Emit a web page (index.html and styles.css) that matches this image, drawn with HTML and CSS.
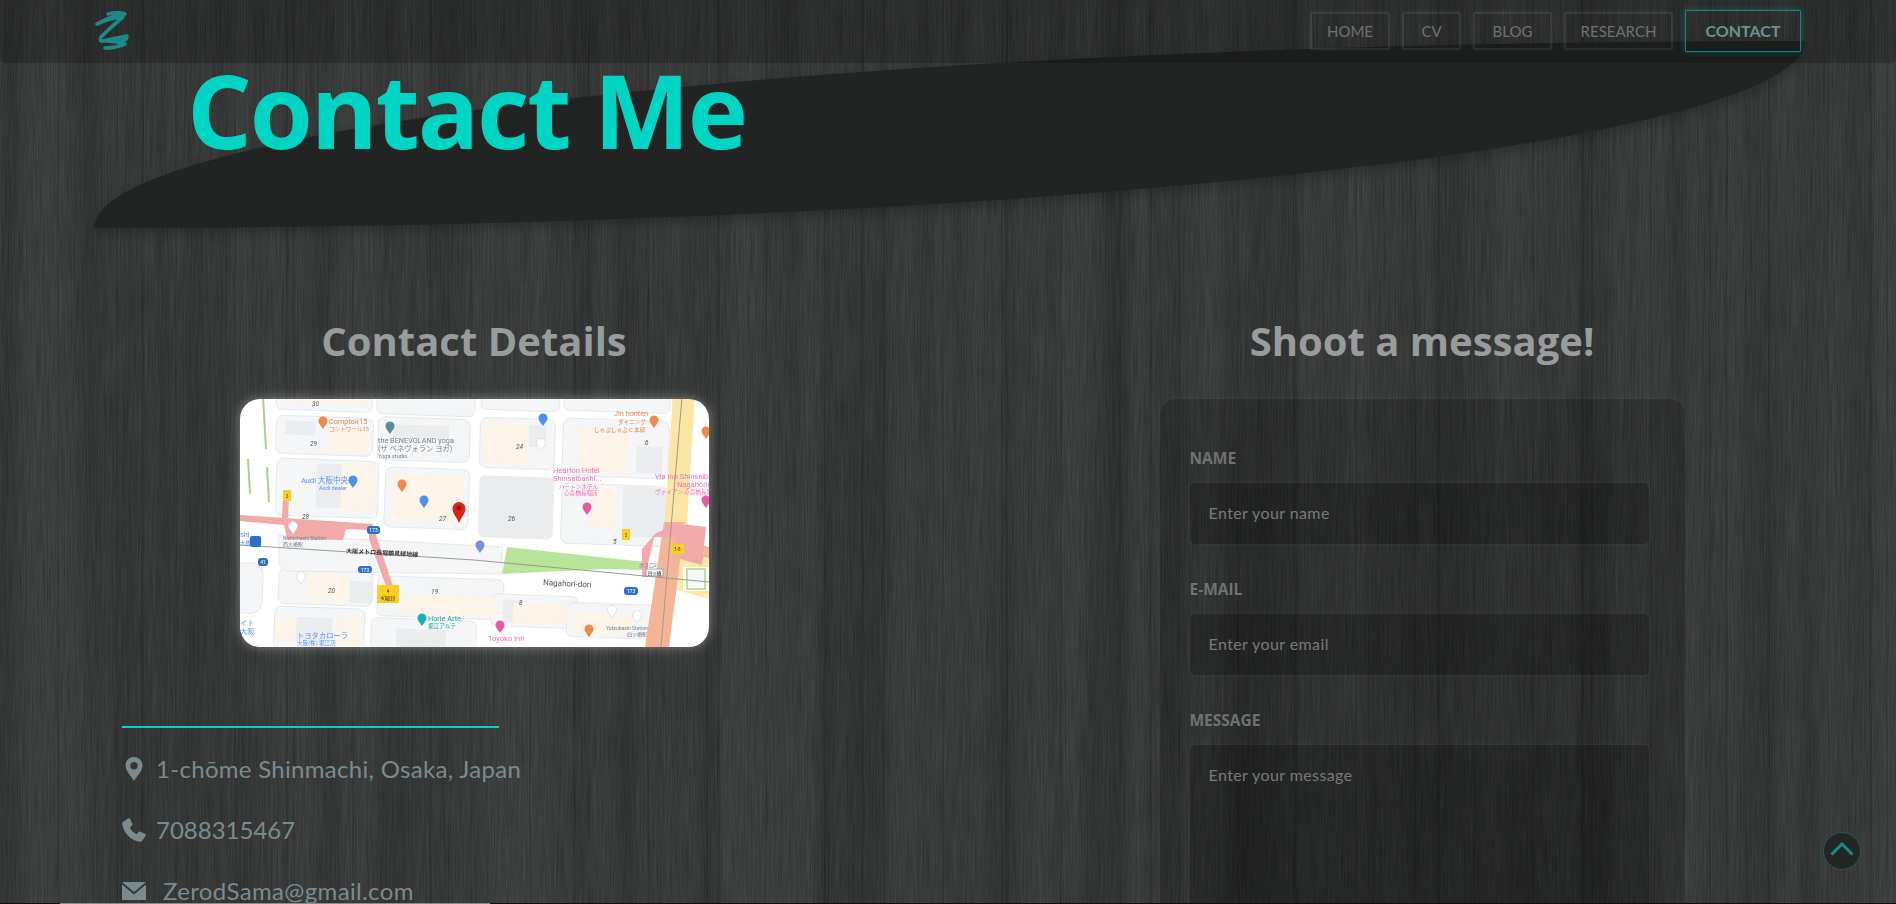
FILE: index.html
```html
<!DOCTYPE html>
<html lang="en">
<head>
<meta charset="utf-8">
<title>Contact Me</title>
<link rel="stylesheet" href="styles.css">
</head>
<body>
<svg class="wood" width="1896" height="904" aria-hidden="true">
  <defs>
    <filter id="grain" x="0" y="0" width="100%" height="100%">
      <feTurbulence type="fractalNoise" baseFrequency="0.7 0.018" numOctaves="3" seed="4"/>
      <feColorMatrix type="matrix" values="0 0 0 0 0  0 0 0 0 0  0 0 0 0 0  0.42 0 0 0 -0.12"/>
    </filter>
    <filter id="planks" x="0" y="0" width="100%" height="100%">
      <feTurbulence type="fractalNoise" baseFrequency="0.03 0.0006" numOctaves="2" seed="11"/>
      <feColorMatrix type="matrix" values="0 0 0 0 0  0 0 0 0 0  0 0 0 0 0  0.4 0 0 0 -0.13"/>
    </filter>
  </defs>
  <rect width="1896" height="904" filter="url(#planks)"/>
  <rect width="1896" height="904" filter="url(#grain)"/>
</svg>

<div class="leaf"></div>

<header class="bar">
  <a class="logo" href="#">
    <svg width="40" height="44" viewBox="0 0 40 44">
      <path class="logo-stroke" d="M16 5 Q26 2 33 5 Q20 6 5 15 Q18 9 31 8 Q20 17 9 28 Q7 33 11 32 Q24 29 35 27 Q35 31 30 32 Q22 32 14 32 Q24 32 33 35 Q24 39 13 39"/>
    </svg>
  </a>
  <nav class="nav">
    <a class="nav-item" href="#">HOME</a>
    <a class="nav-item" href="#">CV</a>
    <a class="nav-item" href="#">BLOG</a>
    <a class="nav-item" href="#">RESEARCH</a>
    <a class="nav-item active" href="#">CONTACT</a>
  </nav>
</header>

<section class="hero"><h1 class="title">Contact Me</h1></section>

<main class="columns">
  <section class="col">
    <h2 class="col-title">Contact Details</h2>
    <div class="map">
      <svg class="map-svg" width="469" height="248" viewBox="0 0 469 248">
        <defs>
          <path id="pin" d="M0 6 C-1.600 3 -4.500 1 -4.500 -2 A4.500 4.500 0 1 1 4.500 -2 C4.500 1 1.600 3 0 6 Z"/>
        </defs>
        <rect width="469" height="248" fill="#fff"/>
        <g transform="rotate(2 234 124)">
          <g class="blocks">
            <rect x="32" y="-8" width="96" height="25" rx="6"/>
            <rect x="133" y="-8" width="98" height="26" rx="6"/>
            <rect x="33" y="23" width="97" height="38" rx="7"/>
            <rect x="135" y="21" width="92" height="43" rx="7"/>
            <rect x="35" y="66" width="102" height="57" rx="7"/>
            <rect x="144" y="71" width="84" height="60" rx="7"/>
            <rect x="237" y="18" width="75" height="50" rx="7"/>
            <rect x="320" y="16" width="106" height="57" rx="7"/>
            <rect x="321" y="81" width="105" height="60" rx="7"/>
            <rect x="237" y="-8" width="78" height="18" rx="5"/>
            <rect x="320" y="-8" width="106" height="16" rx="5"/>
            <rect x="41" y="175" width="94" height="36" rx="7"/>
            <rect x="140" y="180" width="126" height="40" rx="6"/>
            <rect x="38" y="214" width="90" height="42" rx="6"/>
            <rect x="135" y="222" width="105" height="32" rx="6"/>
            <rect x="254" y="194" width="86" height="32" rx="6"/>
            <rect x="330" y="200" width="90" height="34" rx="6"/>
            <rect x="-8" y="172" width="33" height="50" rx="12"/>
          </g>
          <g class="grey-blocks">
            <rect x="238" y="76" width="75" height="62" rx="6"/>
            <rect x="382" y="82" width="44" height="50"/>
            <rect x="42" y="28" width="30" height="14"/>
            <rect x="75" y="70" width="26" height="44"/>
            <rect x="112" y="186" width="22" height="22"/>
            <rect x="266" y="200" width="22" height="22"/>
            <rect x="281" y="24" width="22" height="22"/>
            <rect x="352" y="40" width="18" height="26"/>
            <rect x="394" y="42" width="26" height="26"/>
            <rect x="150" y="28" width="56" height="14"/>
            <rect x="60" y="224" width="36" height="24"/>
            <rect x="160" y="232" width="50" height="20"/>
          </g>
          <g class="tan-blocks">
            <rect x="42" y="-4" width="80" height="14"/>
            <rect x="84" y="34" width="44" height="24"/>
            <rect x="100" y="70" width="34" height="46"/>
            <rect x="150" y="78" width="72" height="46"/>
            <rect x="240" y="22" width="46" height="42"/>
            <rect x="346" y="84" width="30" height="40"/>
            <rect x="336" y="26" width="50" height="44"/>
            <rect x="70" y="180" width="40" height="28"/>
            <rect x="165" y="198" width="96" height="20"/>
            <rect x="276" y="202" width="55" height="20"/>
            <rect x="335" y="210" width="60" height="20"/>
            <rect x="40" y="226" width="20" height="24"/>
            <rect x="100" y="222" width="24" height="30"/>
          </g>
        </g>
        <polygon class="lane" points="39,136 262,148 262,175 45,172 39,165"/>
        <polygon points="267,148 406,163 404,171 364,170 262,175" fill="#b9e59a"/>
        <polygon points="452,148 469,150 469,200 434,190 438,160" fill="#fde9a8"/>
        <rect x="443" y="168" width="26" height="24" fill="#fff"/>
        <rect x="447" y="170" width="18" height="20" fill="#f5f6f6" stroke="#b9e59a" stroke-width="2"/>
        <polygon points="433,-8 455,-8 447,125 425,125" fill="#fde293" opacity=".85"/>
        <polygon points="424,123 445,123 429,248 405,248" fill="#f4b498"/>
        <polygon points="440,140 469,148 469,159 438,152" fill="#f4b498"/>
        <g class="pink">
          <polygon points="0,116 133,125 131,131 106,130 103,141 47,140 44,126 0,122"/>
          <polygon points="43,98 49,98 48,119 42,119"/>
          <polygon points="129,130 134,130 153,187 146,187 129,140"/>
          <polygon points="426,123 466,128 462,166 440,160 436,138 414,138 408,165 408,178 402,178 402,150 416,134 426,130"/>
        </g>
        <path d="M0 146 L234 161 L469 183" class="rail"/>
        <path d="M442 -2 L421 248" class="rail"/>
        <g stroke="#a6d28b" stroke-width="2" fill="none">
          <path d="M23 -2 L26 50"/>
          <path d="M8 60 L10 95"/>
          <path d="M27 68 L29 103"/>
        </g>
        <text x="72" y="7" class="num">30</text>
        <text x="70" y="47" class="num">29</text>
        <text x="62" y="120" class="num">28</text>
        <text x="199" y="122" class="num">27</text>
        <text x="88" y="194" class="num">20</text>
        <text x="191" y="195" class="num">19</text>
        <text x="276" y="50" class="num">24</text>
        <text x="268" y="122" class="num">26</text>
        <text x="373" y="145" class="num">5</text>
        <text x="405" y="46" class="num">6</text>
        <text x="279" y="206" class="num">8</text>
        <text x="89" y="25" class="orange">Comptoir15</text>
        <text x="89" y="32" class="orange small">コントワール15</text>
        <text x="138" y="44" class="grey">the BENEVOLAND yoga</text>
        <text x="138" y="52" class="grey">(ザ ベネヴォラン ヨガ)</text>
        <text x="138" y="59" class="grey small">Yoga studio</text>
        <text x="61" y="84" class="blue big">Audi 大阪中央</text>
        <text x="79" y="91" class="blue small">Audi dealer</text>
        <text x="43" y="141" class="grey tiny">Nishichashi Station</text>
        <text x="43" y="147" class="grey tiny">西大橋駅</text>
        <text x="106" y="154" class="line-name" transform="rotate(3 106 154)">大阪メトロ長堀鶴見緑地線</text>
        <text x="188" y="222" class="teal">Horie Arte</text>
        <text x="188" y="229" class="teal small">堀江アルテ</text>
        <text x="57" y="239" class="blue">トヨタカローラ</text>
        <text x="57" y="246" class="blue small">大阪(株) 堀江店</text>
        <text x="0" y="138" class="blue">shi</text>
        <text x="0" y="146" class="blue small">大橋</text>
        <text x="0" y="226" class="blue">イト</text>
        <text x="0" y="235" class="blue">大阪</text>
        <text x="374" y="17" class="orange">Jin honten</text>
        <text x="378" y="25" class="orange small">ダイニング</text>
        <text x="354" y="33" class="orange small">しゃぶしゃぶ C 本邸</text>
        <text x="313" y="74" class="pinktext big">Hearton Hotel</text>
        <text x="313" y="82" class="pinktext big">Shinsaibashi...</text>
        <text x="319" y="90" class="pinktext small">ハートンホテル</text>
        <text x="324" y="96" class="pinktext small">心斎橋長堀店</text>
        <text x="415" y="80" class="pinktext big">Via Inn Shinsaiba</text>
        <text x="437" y="88" class="pinktext big">Nagahorid</text>
        <text x="415" y="95" class="pinktext small">ヴァイアン 心斎橋長堀</text>
        <text x="303" y="186" class="road" transform="rotate(3 303 186)">Nagahori-dori</text>
        <text x="366" y="231" class="grey tiny">Yotsubashi Station</text>
        <text x="387" y="237" class="grey tiny">四ツ橋駅</text>
        <text x="248" y="242" class="pinktext big">Toyoko Inn</text>
        <text x="399" y="168" class="grey tiny">ボスロ2</text>
        <g class="shield">
          <rect x="127" y="127" width="13" height="8" rx="3"/>
          <rect x="118" y="167" width="14" height="7" rx="3"/>
          <rect x="18" y="159" width="10" height="8" rx="3"/>
          <rect x="384" y="188" width="14" height="8" rx="3"/>
          <rect x="10" y="137" width="11" height="11" rx="2" fill="#1a8fd1"/>
        </g>
        <text x="133.500" y="133" class="shield-text">173</text>
        <text x="125" y="172.500" class="shield-text">173</text>
        <text x="23" y="165" class="shield-text">41</text>
        <text x="391" y="194" class="shield-text">173</text>
        <g class="tag">
          <rect x="43" y="91" width="8" height="11"/>
          <rect x="137" y="186" width="22" height="18"/>
          <rect x="382" y="130" width="8" height="11"/>
          <rect x="431" y="145" width="13" height="10"/>
        </g>
        <text x="47" y="98.500" class="tag-text">2</text>
        <text x="148" y="194" class="tag-text">4</text>
        <text x="148" y="201" class="tag-text">4(堀田)</text>
        <text x="386" y="137.500" class="tag-text">2</text>
        <text x="437.500" y="152" class="tag-text">1-8</text>
        <rect x="406" y="170" width="17" height="7" fill="#f3f3f3" stroke="#888" stroke-width=".6"/>
        <text x="414.500" y="175.500" class="tag-text">四ツ橋</text>
        <use href="#pin" x="83" y="24" fill="#f08a4b"/>
        <use href="#pin" x="150" y="29" fill="#5f8a99"/>
        <use href="#pin" x="113" y="83" fill="#4b8ff0"/>
        <use href="#pin" x="162" y="87" fill="#f08a4b"/>
        <use href="#pin" x="184" y="103" fill="#4b8ff0"/>
        <path d="M219 124 C217 118 212.500 115 212.500 109.500 A6.500 6.500 0 1 1 225.500 109.500 C225.500 115 221 118 219 124 Z" fill="#d8231b"/>
        <circle cx="219" cy="109" r="2.200" fill="#8a1410"/>
        <use href="#pin" x="303" y="21" fill="#4b8ff0"/>
        <use href="#pin" x="347" y="110" fill="#e85aa8"/>
        <use href="#pin" x="414" y="23" fill="#f08a4b"/>
        <use href="#pin" x="466" y="34" fill="#f08a4b"/>
        <use href="#pin" x="466" y="103" fill="#e85aa8"/>
        <use href="#pin" x="240" y="148" fill="#7c8fdc"/>
        <use href="#pin" x="182" y="221" fill="#17b4b4"/>
        <use href="#pin" x="260" y="228" fill="#e85aa8"/>
        <use href="#pin" x="349" y="232" fill="#f08a4b"/>
        <use href="#pin" x="301" y="46" fill="#fff" stroke="#ccc" stroke-width=".5"/>
        <use href="#pin" x="53" y="129" fill="#fff" stroke="#ccc" stroke-width=".5"/>
        <use href="#pin" x="61" y="179" fill="#fff" stroke="#ccc" stroke-width=".5"/>
        <use href="#pin" x="372" y="213" fill="#fff" stroke="#ccc" stroke-width=".5"/>
        <use href="#pin" x="397" y="218" fill="#fff" stroke="#ccc" stroke-width=".5"/>
      </svg>
    </div>
    <ul class="details">
      <li class="detail">
        <svg class="detail-icon" width="24" height="24" viewBox="0 0 24 24"><path fill-rule="evenodd" d="M12 0 C7 0 3.500 4 3.500 8.500 C3.500 14 9 19 12 24 C15 19 20.500 14 20.500 8.500 C20.500 4 17 0 12 0 Z M12 5 A3.700 3.700 0 1 1 12 12.400 A3.700 3.700 0 1 1 12 5 Z"/></svg>
        <span>1-chōme Shinmachi, Osaka, Japan</span>
      </li>
      <li class="detail detail-phone">
        <svg class="detail-icon" width="24" height="24" viewBox="0 0 24 24"><path d="M1 4 L6 0.500 C7 0 7.800 .4 8.200 1.200 L10.300 5.800 C10.600 6.600 10.300 7.300 9.700 7.800 L7.800 9.300 C9 12.500 11.500 15 14.700 16.200 L16.200 14.300 C16.700 13.700 17.400 13.400 18.200 13.700 L22.800 15.800 C23.600 16.200 24 17 23.500 18 L20 23 C19.500 23.800 18.500 24 17.500 23.800 C8.500 22 2 15.500 .2 6.500 C0 5.500 .2 4.500 1 4 Z"/></svg>
        <span>7088315467</span>
      </li>
      <li class="detail detail-mail">
        <svg class="detail-icon" width="24" height="18" viewBox="0 0 24 18"><path d="M0 0 H24 L12 10 Z"/><path d="M0 2.500 V18 H24 V2.500 L12 12.500 Z"/></svg>
        <span>ZerodSama@gmail.com</span>
      </li>
    </ul>
  </section>

  <section class="col">
    <h2 class="col-title">Shoot a message!</h2>
    <form class="card">
      <div class="field">
        <label class="field-label" for="name">NAME</label>
        <input class="control" id="name" type="text" placeholder="Enter your name">
      </div>
      <div class="field">
        <label class="field-label" for="email">E-MAIL</label>
        <input class="control" id="email" type="text" placeholder="Enter your email">
      </div>
      <div class="field">
        <label class="field-label" for="message">MESSAGE</label>
        <textarea class="control area" id="message" placeholder="Enter your message"></textarea>
      </div>
    </form>
  </section>
</main>

<a class="to-top" href="#" aria-label="Back to top">
  <svg width="24" height="14" viewBox="0 0 24 14"><path class="chevron" d="M1.500 12.500 L12 2 L22.500 12.500"/></svg>
</a>
<div class="edge"></div>
</body>
</html>
```

FILE: styles.css
```css
* { box-sizing: border-box; }
html, body { margin: 0; height: 904px; overflow: hidden; }
body {
  position: relative;
  background-color: #414343;
  background-image:
    repeating-linear-gradient(to right, transparent 0 57px, rgba(0, 0, 0, .09) 57px 59px),
    repeating-linear-gradient(to right, transparent 0 141px, rgba(0, 0, 0, .1) 141px 144px),
    repeating-linear-gradient(to right, rgba(255, 255, 255, .012) 0 83px, transparent 83px 166px);
  font-family: "Open Sans", "Liberation Sans", sans-serif;
}
.wood { position: absolute; left: 0; top: 0; z-index: 0; }

.leaf {
  position: absolute;
  left: 94px;
  top: 41px;
  width: 1711px;
  height: 187px;
  background: #222423;
  border-radius: 100% 0;
  box-shadow: 0 5px 12px rgba(0, 0, 0, .22);
}

.bar {
  position: relative;
  height: 63px;
  display: flex;
  align-items: center;
  justify-content: space-between;
  padding: 0 95px 1px 92px;
  background: rgba(0, 0, 0, .2);
  border-radius: 0 0 6px 6px;
}
.logo { display: block; width: 40px; height: 44px; }
.logo-stroke { fill: none; stroke: #1d8a88; stroke-width: 3.6; stroke-linecap: round; stroke-linejoin: round; }
.nav { display: grid; grid-template-columns: 80px 59px 79px 109px 116px; align-items: center; gap: 12px; }
.nav-item {
  display: block;
  height: 38px;
  text-align: center;
  font: 400 15px/34px "Lato", sans-serif;
  color: #6f7171;
  text-decoration: none;
  border: 2px solid rgba(255, 255, 255, .08);
  border-radius: 2px;
  box-shadow: 0 0 4px rgba(255, 255, 255, .06);
}
.nav-item.active {
  height: 42px;
  font-weight: 700;
  font-size: 16px;
  line-height: 40px;
  color: #6b9390;
  border: 1px solid #12877f;
  border-radius: 1px;
  box-shadow: 0 0 6px rgba(20, 160, 150, .4);
}

.hero { position: relative; height: 127px; padding-left: 187px; }
.title {
  margin: 0;
  font-family: "Open Sans", sans-serif;
  font-size: 102px;
  font-weight: 700;
  line-height: 93px;
  color: #00d5c3;
  letter-spacing: -2.200px;
  white-space: nowrap;
}

.columns { position: relative; display: grid; grid-template-columns: 1fr 1fr; margin-top: 128px; }
.col-title {
  margin: 0 0 35px;
  height: 46px;
  text-align: center;
  font-size: 40px;
  font-weight: 700;
  line-height: 46px;
  color: #989c9c;
}
.map {
  width: 469px;
  height: 248px;
  margin: 0 auto;
  border-radius: 20px;
  overflow: hidden;
  box-shadow: 0 0 12px rgba(255, 255, 255, .38);
}
.map-svg { display: block; filter: blur(.65px); font-family: "Roboto", "Noto Sans CJK JP", sans-serif; }
.blocks rect { fill: #f5f6f7; stroke: #e6e8e9; stroke-width: 1; }
.lane { fill: #f5f6f7; stroke: #e6e8e9; }
.grey-blocks rect { fill: #ebeced; }
.tan-blocks rect { fill: #fdf4ea; }
.pink polygon { fill: #f2a9a9; }
.rail { fill: none; stroke: #9a9a9a; stroke-width: 1; }
.map-svg text { font-size: 7.300px; }
.map-svg .small { font-size: 5.600px; }
.map-svg .tiny { font-size: 5px; }
.map-svg .big { font-size: 7.500px; }
.map-svg .num { font-size: 6.500px; font-style: italic; fill: #555; }
.orange { fill: #e8884f; }
.grey { fill: #7b8086; }
.blue { fill: #5b94ee; }
.teal { fill: #15a7a7; }
.pinktext { fill: #f26dbb; }
.map-svg .line-name { font-size: 6px; font-weight: 700; fill: #333; }
.map-svg .road { font-size: 8px; fill: #555; }
.shield rect { fill: #2d6fc9; }
.map-svg .shield-text { font-size: 5px; fill: #fff; text-anchor: middle; }
.tag rect { fill: #f8cf22; }
.map-svg .tag-text { font-size: 4.500px; fill: #333; text-anchor: middle; }

.details {
  list-style: none;
  width: 377px;
  margin: 79px 0 0 122px;
  padding: 17px 0 0;
  border-top: 2px solid #00d5c3;
  font-family: "Lato", sans-serif;
  font-size: 24px;
  line-height: 34px;
  color: #7a8b8e;
  white-space: nowrap;
}
.detail { display: flex; align-items: center; gap: 10px; height: 61px; padding-bottom: 14px; letter-spacing: .3px; }
.detail-icon { flex: none; fill: #7a8b8e; }
.detail-phone { letter-spacing: 0; }
.detail-mail { gap: 17px; letter-spacing: .35px; }

.card {
  width: 525px;
  height: 600px;
  margin: 0 auto;
  padding: 48px 36px 0 30px;
  background: rgba(0, 0, 0, .14);
  border-radius: 16px;
  box-shadow: 0 0 6px rgba(255, 255, 255, .06);
}
.field { margin-bottom: 34px; }
.field-label {
  display: block;
  height: 22px;
  margin-bottom: 14px;
  font-size: 15.500px;
  font-weight: 700;
  line-height: 22px;
  color: #6f7272;
}
.control {
  display: block;
  width: 459px;
  height: 61px;
  padding: 0 19px 2px;
  border: 0;
  border-radius: 5px;
  background: rgba(0, 0, 0, .2);
  box-shadow: 0 0 5px rgba(255, 255, 255, .06);
  font-family: "Lato", sans-serif;
  font-size: 16px;
  color: #777;
  outline: 0;
  resize: none;
}
.control::placeholder { color: #787a7a; opacity: 1; letter-spacing: .4px; }
.area { height: 300px; padding-top: 20px; }

.to-top {
  position: absolute;
  left: 1823px;
  top: 832px;
  width: 38px;
  height: 38px;
  display: flex;
  align-items: center;
  justify-content: center;
  padding-bottom: 4px;
  background: #242626;
  border: 1px solid #1b5c58;
  border-radius: 50%;
}
.chevron { fill: none; stroke: #1e8a84; stroke-width: 3; }
.edge {
  position: absolute;
  left: 0;
  right: 0;
  bottom: 0;
  height: 1px;
  background: linear-gradient(to right, #111 60px, #8a8f8e 60px, #8a8f8e 490px, #111 490px);
}
```
